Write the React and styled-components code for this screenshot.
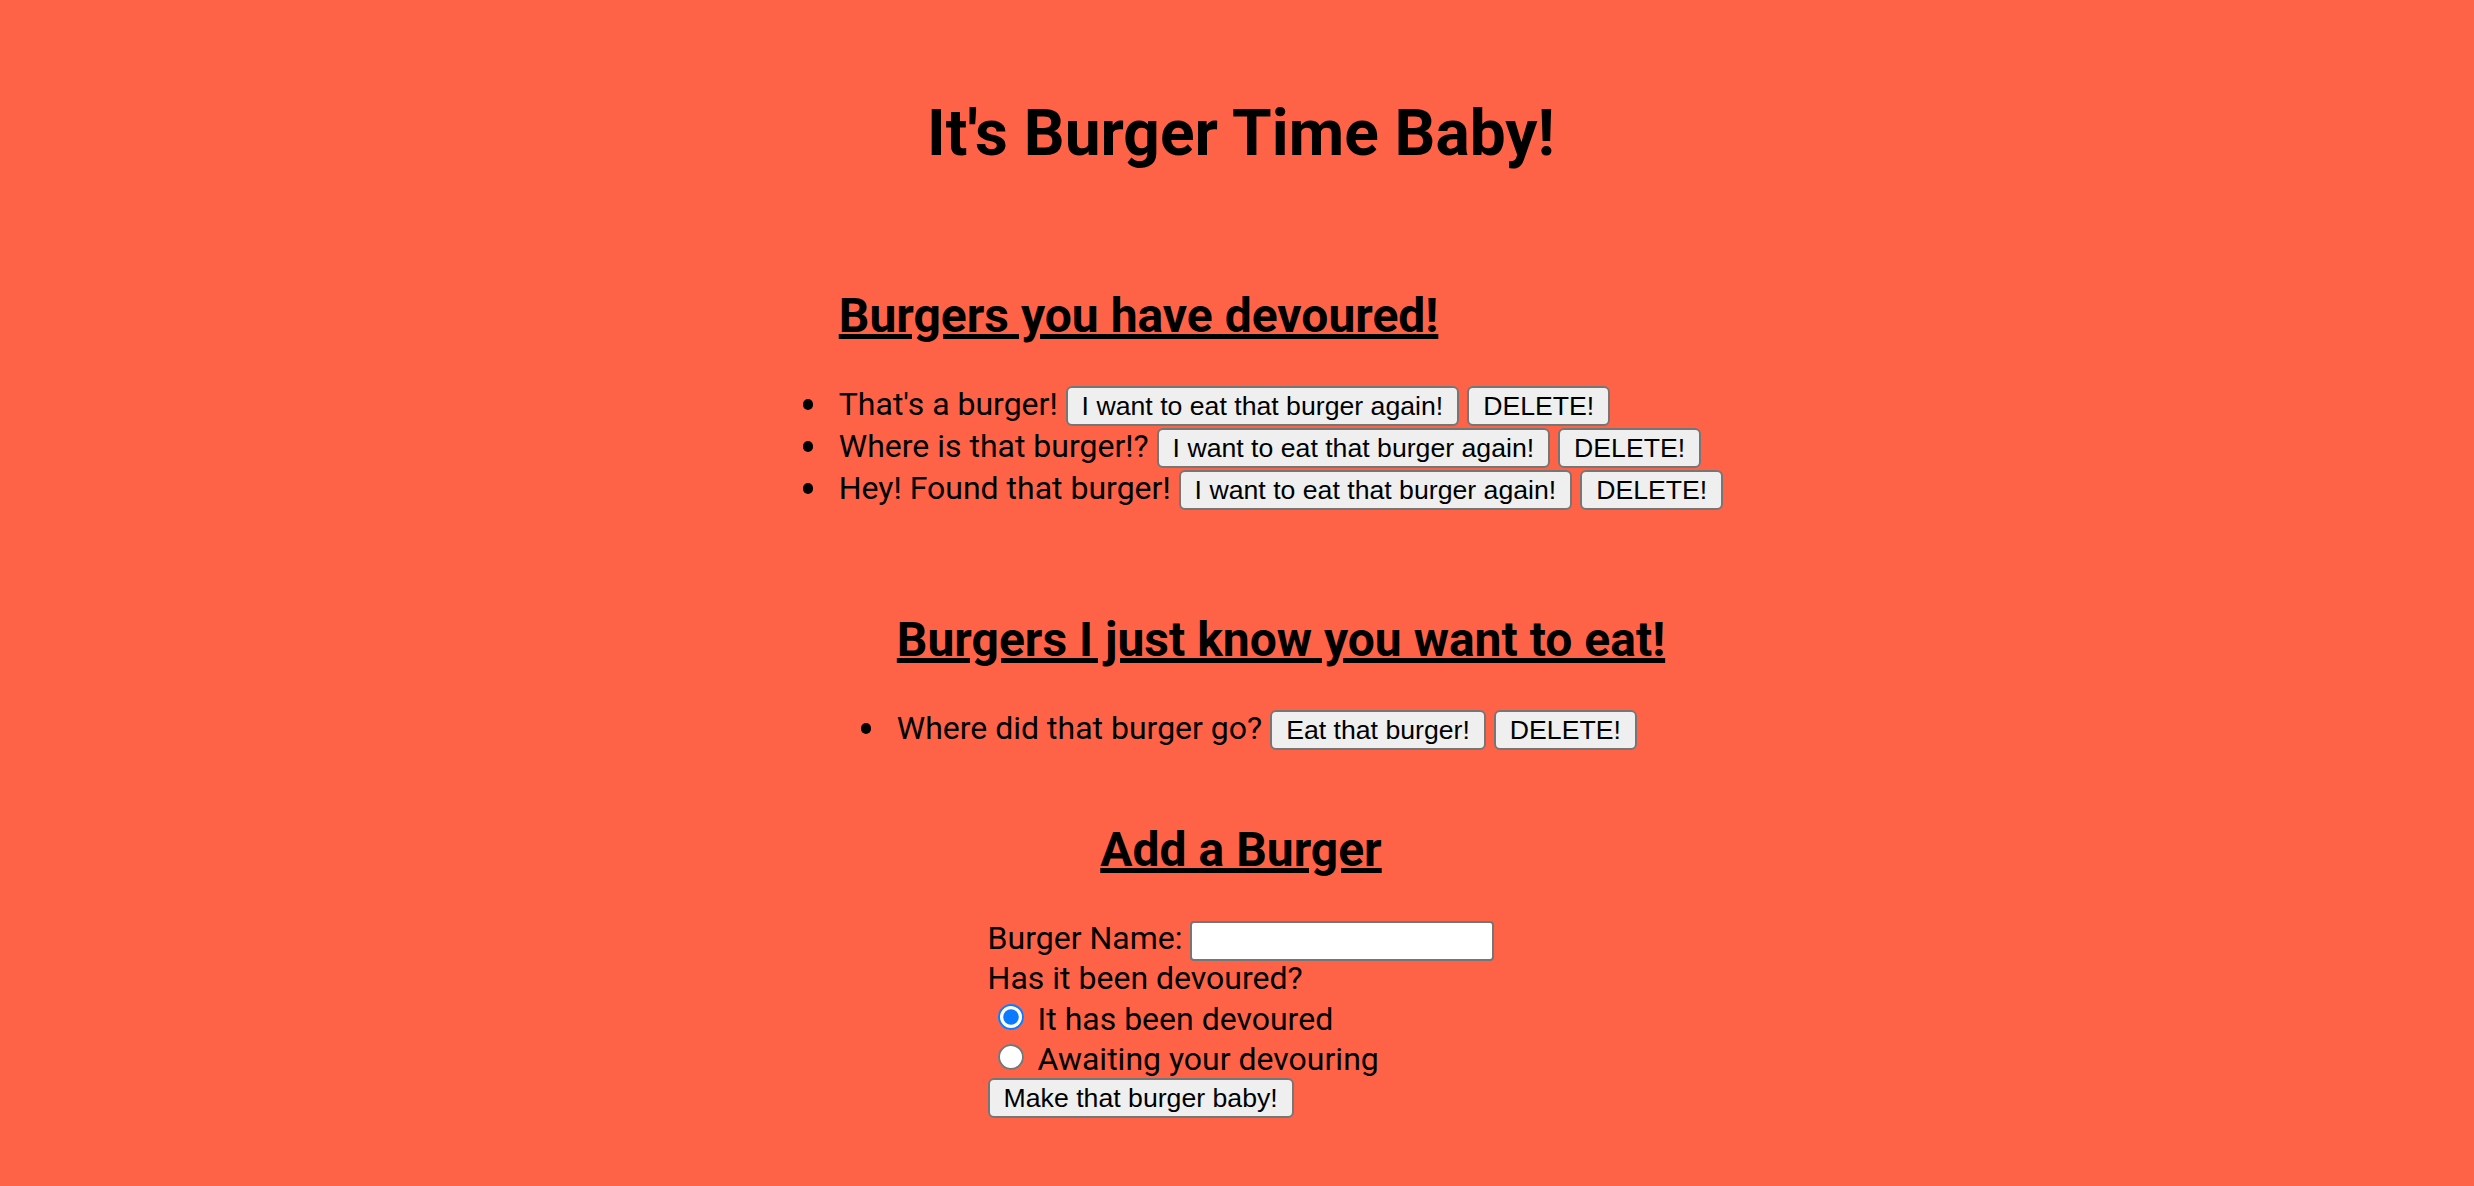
import React from 'react'
import styled, { createGlobalStyle } from 'styled-components';

const GlobalStyle = createGlobalStyle`
    html, body {
        margin: 0;
        padding: 0;
        background: #ff6347;
    }
    body {
        min-height: 100vh;
        font-family: Roboto, "Noto Sans", sans-serif;
        color: #000;
    }
`;

const devoured = [
    { id: 1, name: "That's a burger!" },
    { id: 2, name: 'Where is that burger!?' },
    { id: 3, name: 'Hey! Found that burger!' },
];

const waiting = [
    { id: 4, name: 'Where did that burger go?' },
];

function App() {
    return (
        <PageStyled>
            <GlobalStyle />
            <Title>It's Burger Time Baby!</Title>

            <Section $top={58}>
                <SectionHeading>Burgers you have devoured!</SectionHeading>
                <BurgerList>
                    {devoured.map((b) => (
                        <li key={b.id}>
                            {b.name} <Button>I want to eat that burger again!</Button> <Button>DELETE!</Button>
                        </li>
                    ))}
                </BurgerList>
            </Section>

            <Section $top={51}>
                <SectionHeading>Burgers I just know you want to eat!</SectionHeading>
                <BurgerList>
                    {waiting.map((b) => (
                        <li key={b.id}>
                            {b.name} <Button>Eat that burger!</Button> <Button>DELETE!</Button>
                        </li>
                    ))}
                </BurgerList>
            </Section>

            <FormSection>
                <SectionHeading>Add a Burger</SectionHeading>
                <BurgerForm onSubmit={(e) => e.preventDefault()}>
                    <FormRow>
                        <label htmlFor="burger-name">Burger Name:</label> <TextInput id="burger-name" type="text" />
                    </FormRow>
                    <FormRow>Has it been devoured?</FormRow>
                    <FormRow>
                        <input type="radio" name="devoured" id="yes" defaultChecked /> <label htmlFor="yes">It has been devoured</label>
                    </FormRow>
                    <FormRow>
                        <input type="radio" name="devoured" id="no" /> <label htmlFor="no">Awaiting your devouring</label>
                    </FormRow>
                    <Button type="submit">Make that burger baby!</Button>
                </BurgerForm>
            </FormSection>
        </PageStyled>
    )
}

const PageStyled = styled.div`
    zoom: 2;
    display: flex;
    flex-direction: column;
    align-items: center;
    padding: 48px 0 40px 4px;
    font-size: 16px;
`;

const Title = styled.h1`
    margin: 0;
    font-size: 32px;
    line-height: 38px;
    font-weight: 700;
    text-align: center;
`;

const SectionHeading = styled.h2`
    margin: 0;
    font-size: 24px;
    line-height: 28px;
    font-weight: 700;
    text-decoration: underline;
    text-decoration-thickness: 2.5px;
    text-underline-offset: 1.2px;
`;

const Section = styled.div`
    margin-top: ${(p) => p.$top}px;
    padding-left: 40px;
`;

const BurgerList = styled.ul`
    margin: 20px 0 0;
    padding: 0;
    list-style: none;
    li {
        position: relative;
        line-height: 20px;
        white-space: nowrap;
    }
    /* bullet dot */
    li::before {
        content: '';
        position: absolute;
        left: -18px;
        top: 7.5px;
        width: 5.3px;
        height: 5.3px;
        border-radius: 50%;
        background: #000;
    }
`;

const Button = styled.button`
    height: 20px;
    margin: 0;
    padding: 0 7px;
    box-sizing: border-box;
    border: 1px solid #767676;
    border-radius: 3px;
    background: #efefef;
    color: #000;
    font-family: "Liberation Sans", Arial, sans-serif;
    font-size: 13.333px;
    line-height: 16px;
    cursor: pointer;
`;

const FormSection = styled.div`
    margin-top: 36px;
    display: flex;
    flex-direction: column;
    align-items: center;
`;

const BurgerForm = styled.form`
    margin-top: 20px;
    display: flex;
    flex-direction: column;
    align-items: flex-start;
    input[type='radio'] {
        margin: 3px 3px 0 5px;
        width: 13px;
        height: 13px;
        accent-color: #0a7aff;
    }
`;

const FormRow = styled.div`
    height: 20px;
    line-height: 20px;
    white-space: nowrap;
`;

const TextInput = styled.input`
    width: 152px;
    height: 20px;
    box-sizing: border-box;
    margin: 0;
    padding: 1px 2px;
    border: 1px solid #767676;
    border-radius: 2px;
    background: #fff;
    font-family: "Liberation Sans", Arial, sans-serif;
    font-size: 13.333px;
`;

export default App;
